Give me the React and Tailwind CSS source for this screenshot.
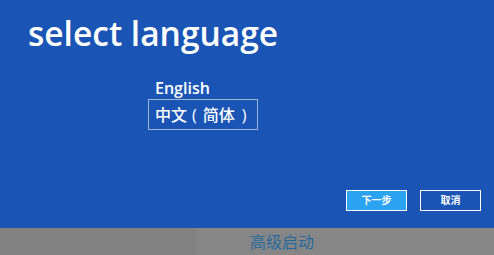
import React, { useState } from "react";

export default function App() {
  const [lang, setLang] = useState("zh");

  return (
    <div className="w-[494px] h-[255px] flex flex-col overflow-hidden font-['Open_Sans','Noto_Sans_CJK_SC',sans-serif]">
      <div className="h-[228px] bg-[#1a55b6] flex flex-col">
        <h1 className="pl-[28px] pt-[11px] text-[33.5px] leading-[44px] font-semibold text-white">
          select language
        </h1>

        <div className="pl-[148px] pt-[22px] flex flex-col items-start">
          <button
            onClick={() => setLang("en")}
            className={
              "px-[6px] h-[22px] text-[16px] leading-[20px] font-semibold text-white border " +
              (lang === "en" ? "border-[#9fb3d6]" : "border-transparent")
            }
          >
            English
          </button>
          <button
            onClick={() => setLang("zh")}
            className={
              "pl-[6px] pr-[11px] h-[31px] text-[16px] leading-[28px] font-medium text-white border flex items-center " +
              (lang === "zh" ? "border-[#9fb3d6]" : "border-transparent")
            }
          >
            中文<span className="ml-[5px] mr-[6px]">(</span>简体<span className="ml-[7px]">)</span>
          </button>
        </div>

        <div className="mt-auto mb-[17px] pr-[13px] flex justify-end gap-[13px]">
          <button className="w-[61px] h-[21px] bg-[#2ba3f3] border border-white text-white text-[10px] font-semibold">
            下一步
          </button>
          <button className="w-[61px] h-[21px] bg-[#1a55b6] border border-white text-white text-[10px] font-semibold">
            取消
          </button>
        </div>
      </div>

      <div className="flex-1 flex bg-[#868686]">
        <div className="w-[196px] bg-[#828282]" />
        <div className="flex-1 pl-[54px] flex items-center text-[16px] text-[#286a9c]">
          高级启动
        </div>
      </div>
    </div>
  );
}
